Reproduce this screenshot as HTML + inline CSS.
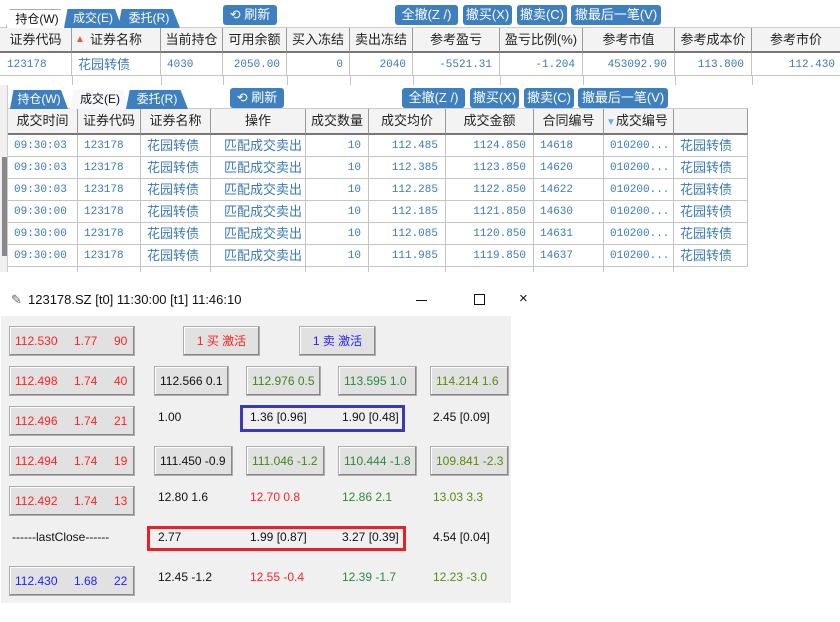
<!DOCTYPE html>
<html><head><meta charset="utf-8"><style>
*{margin:0;padding:0;box-sizing:border-box}
body{width:840px;height:622px;background:#fff;position:relative;overflow:hidden;font-family:"Liberation Sans","Noto Sans CJK SC",sans-serif}
.a{position:absolute}
.btn{position:absolute;background:#3e7fbf;color:#fff;font-size:13px;border-radius:3px;text-align:center;line-height:20px;height:20px;white-space:nowrap}
.hd{position:absolute;background:#f3f3f3;border-right:1px solid #999;border-bottom:2px solid #777;font-size:13px;color:#222;text-align:center}
.c{position:absolute;border-right:1px solid #c4c4c4;border-bottom:1px solid #c4c4c4;font-size:11px;color:#3a7ab8;font-family:"Liberation Mono","Noto Sans CJK SC",monospace;white-space:nowrap;overflow:hidden}
.c.z{font-family:"Liberation Sans","Noto Sans CJK SC",sans-serif;font-size:13px}
.tab{position:absolute;font-size:12px;height:19px;line-height:19px;text-align:center;color:#fff;background:#3e7fbf;clip-path:polygon(6% 0,88% 0,100% 100%,0 100%)}
.tab.on{background:#fff;color:#111}
.wb{position:absolute;background:#e1e1e1;border:1px solid #adadad;box-shadow:inset -1px -1px 0 #888,inset 1px 1px 0 #fff;font-family:"Liberation Sans","Noto Sans CJK SC",sans-serif;font-size:12px;line-height:28px;height:30px;white-space:nowrap}
.t{position:absolute;font-size:12px;white-space:nowrap}
</style></head><body>
<!-- top panel -->
<div class="a" style="left:0;top:27px;width:840px;height:1px;background:#ccc"></div>
<div class="tab on" style="left:6px;top:9px;width:62px;border:1px solid #aaa;border-bottom:none">持仓(W)</div>
<div class="tab" style="left:64px;top:9px;width:58px">成交(E)</div>
<div class="tab" style="left:118px;top:9px;width:62px">委托(R)</div>
<div class="btn" style="left:223px;top:5px;width:54px">⟲ 刷新</div>
<div class="btn" style="left:395px;top:5px;width:63px">全撤(Z /)</div>
<div class="btn" style="left:463px;top:5px;width:49px">撤买(X)</div>
<div class="btn" style="left:517px;top:5px;width:50px">撤卖(C)</div>
<div class="btn" style="left:571px;top:5px;width:90px">撤最后一笔(V)</div>

<div class="hd" style="left:0;top:28px;width:72px;height:25px;line-height:23px">证券代码</div>
<div class="hd" style="left:72px;top:28px;width:89px;height:25px;line-height:23px"><span style="color:#e53;font-size:10px;position:absolute;left:3px">▲</span>证券名称</div>
<div class="hd" style="left:161px;top:28px;width:62px;height:25px;line-height:23px">当前持仓</div>
<div class="hd" style="left:223px;top:28px;width:64px;height:25px;line-height:23px">可用余额</div>
<div class="hd" style="left:287px;top:28px;width:63px;height:25px;line-height:23px">买入冻结</div>
<div class="hd" style="left:350px;top:28px;width:63px;height:25px;line-height:23px">卖出冻结</div>
<div class="hd" style="left:413px;top:28px;width:87px;height:25px;line-height:23px">参考盈亏</div>
<div class="hd" style="left:500px;top:28px;width:83px;height:25px;line-height:23px">盈亏比例(%)</div>
<div class="hd" style="left:583px;top:28px;width:92px;height:25px;line-height:23px">参考市值</div>
<div class="hd" style="left:675px;top:28px;width:77px;height:25px;line-height:23px">参考成本价</div>
<div class="hd" style="left:752px;top:28px;width:88px;height:25px;line-height:23px;border-right:none">参考市价</div>

<div class="c" style="left:0;top:53px;width:72px;height:23px;line-height:24px;padding-left:7px">123178</div>
<div class="c z" style="left:72px;top:53px;width:89px;height:23px;line-height:23px;padding-left:6px">花园转债</div>
<div class="c" style="left:161px;top:53px;width:62px;height:23px;line-height:24px;padding-left:6px">4030</div>
<div class="c" style="left:223px;top:53px;width:64px;height:23px;line-height:24px;text-align:right;padding-right:6px">2050.00</div>
<div class="c" style="left:287px;top:53px;width:63px;height:23px;line-height:24px;text-align:right;padding-right:6px">0</div>
<div class="c" style="left:350px;top:53px;width:63px;height:23px;line-height:24px;text-align:right;padding-right:6px">2040</div>
<div class="c" style="left:413px;top:53px;width:87px;height:23px;line-height:24px;text-align:right;padding-right:7px">-5521.31</div>
<div class="c" style="left:500px;top:53px;width:83px;height:23px;line-height:24px;text-align:right;padding-right:7px">-1.204</div>
<div class="c" style="left:583px;top:53px;width:92px;height:23px;line-height:24px;text-align:right;padding-right:7px">453092.90</div>
<div class="c" style="left:675px;top:53px;width:77px;height:23px;line-height:24px;text-align:right;padding-right:7px">113.800</div>
<div class="c" style="left:752px;top:53px;width:88px;height:23px;line-height:24px;text-align:right;padding-right:5px;border-right:none">112.430</div>
<div class="a" style="left:72px;top:76px;width:1px;height:9px;background:#c4c4c4"></div>
<div class="a" style="left:161px;top:76px;width:1px;height:9px;background:#c4c4c4"></div>
<div class="a" style="left:223px;top:76px;width:1px;height:9px;background:#c4c4c4"></div>
<div class="a" style="left:287px;top:76px;width:1px;height:9px;background:#c4c4c4"></div>
<div class="a" style="left:350px;top:76px;width:1px;height:9px;background:#c4c4c4"></div>
<div class="a" style="left:413px;top:76px;width:1px;height:9px;background:#c4c4c4"></div>
<div class="a" style="left:500px;top:76px;width:1px;height:9px;background:#c4c4c4"></div>
<div class="a" style="left:583px;top:76px;width:1px;height:9px;background:#c4c4c4"></div>
<div class="a" style="left:675px;top:76px;width:1px;height:9px;background:#c4c4c4"></div>
<div class="a" style="left:752px;top:76px;width:1px;height:9px;background:#c4c4c4"></div>

<!-- second panel -->
<div class="a" style="left:0;top:85px;width:8px;height:187px;background:#f0f0f0;border-right:1px solid #ccc"></div>
<div class="a" style="left:2px;top:157px;width:5px;height:99px;background:#888"></div>
<div class="a" style="left:8px;top:85px;width:320px;height:24px;background:#fff"></div>
<div class="a" style="left:8px;top:108px;width:740px;height:1px;background:#ccc"></div>
<div class="tab" style="left:10px;top:90px;width:58px">持仓(W)</div>
<div class="tab on" style="left:70px;top:90px;width:60px;background:#f6f8fc">成交(E)</div>
<div class="tab" style="left:126px;top:90px;width:62px">委托(R)</div>
<div class="btn" style="left:230px;top:88px;width:54px">⟲ 刷新</div>
<div class="btn" style="left:402px;top:88px;width:63px">全撤(Z /)</div>
<div class="btn" style="left:470px;top:88px;width:49px">撤买(X)</div>
<div class="btn" style="left:524px;top:88px;width:50px">撤卖(C)</div>
<div class="btn" style="left:578px;top:88px;width:90px">撤最后一笔(V)</div>
<div id="g"></div>
<script>
var cols=[8,78,141,211,306,369,446,534,604,674,748];
var hds=["成交时间","证券代码","证券名称","操作","成交数量","成交均价","成交金额","合同编号","<span style='color:#6aaee8;font-size:10px'>▼</span>成交编号",""];
var h="";
for(var i=0;i<10;i++){h+='<div class="hd" style="left:'+cols[i]+'px;top:109px;width:'+(cols[i+1]-cols[i])+'px;height:26px;line-height:24px;'+(i==8?'text-align:left;padding-left:2px':'')+'">'+hds[i]+'</div>';}
var t=["09:30:03","09:30:03","09:30:03","09:30:00","09:30:00","09:30:00"];
var p=["112.485","112.385","112.285","112.185","112.085","111.985"];
var m=["1124.850","1123.850","1122.850","1121.850","1120.850","1119.850"];
var n=["14618","14620","14622","14630","14631","14637"];
for(var r=0;r<6;r++){var y=135+r*22;
var v=[t[r],"123178","花园转债","匹配成交卖出","10",p[r],m[r],n[r],"010200...","花园转债"];
for(var i=0;i<10;i++){var al=(i==4||i==5||i==6)?'text-align:right;padding-right:7px':'padding-left:'+(i==3?13:6)+'px';
var z=(i==2||i==3||i==9)?' z':'';
h+='<div class="c'+z+'" style="left:'+cols[i]+'px;top:'+y+'px;width:'+(cols[i+1]-cols[i])+'px;height:22px;line-height:'+(z?22:23)+'px;'+al+'">'+v[i]+'</div>';}}
for(var i=1;i<10;i++)h+='<div class="a" style="left:'+(cols[i]-1)+'px;top:267px;width:1px;height:5px;background:#c4c4c4"></div>';
document.getElementById("g").innerHTML=h;
</script>

<!-- dialog -->
<div class="a" style="left:0;top:288px;width:540px;height:25px;background:#fff"></div>
<div class="t" style="left:11px;top:292px;font-size:13px;color:#666">✎</div>
<div class="t" style="left:28px;top:292px;font-size:13px;color:#111">123178.SZ [t0] 11:30:00 [t1] 11:46:10</div>
<div class="a" style="left:416px;top:300px;width:11px;height:1px;background:#111"></div>
<div class="a" style="left:474px;top:294px;width:11px;height:11px;border:1px solid #111"></div>
<div class="t" style="left:519px;top:290px;font-size:15px;color:#111">×</div>
<div class="a" style="left:1px;top:316px;width:510px;height:287px;background:#f0f0f0"></div>

<div class="wb" style="left:9px;top:326px;width:126px;color:#f22"><span class="a" style="left:5px">112.530</span><span class="a" style="left:64px">1.77</span><span class="a" style="left:104px">90</span></div>
<div class="wb" style="left:9px;top:366px;width:126px;color:#f22"><span class="a" style="left:5px">112.498</span><span class="a" style="left:64px">1.74</span><span class="a" style="left:104px">40</span></div>
<div class="wb" style="left:9px;top:406px;width:126px;color:#f22"><span class="a" style="left:5px">112.496</span><span class="a" style="left:64px">1.74</span><span class="a" style="left:104px">21</span></div>
<div class="wb" style="left:9px;top:446px;width:126px;color:#f22"><span class="a" style="left:5px">112.494</span><span class="a" style="left:64px">1.74</span><span class="a" style="left:104px">19</span></div>
<div class="wb" style="left:9px;top:486px;width:126px;color:#f22"><span class="a" style="left:5px">112.492</span><span class="a" style="left:64px">1.74</span><span class="a" style="left:104px">13</span></div>
<div class="wb" style="left:9px;top:566px;width:126px;color:#22f"><span class="a" style="left:5px">112.430</span><span class="a" style="left:64px">1.68</span><span class="a" style="left:104px">22</span></div>
<div class="t" style="left:12px;top:530px;color:#111">------lastClose------</div>

<div class="wb" style="left:183px;top:326px;width:77px;color:#f22;text-align:center">1 买 激活</div>
<div class="wb" style="left:299px;top:326px;width:77px;color:#22f;text-align:center">1 卖 激活</div>

<div class="wb" style="left:154px;top:366px;width:75px;color:#111;padding-left:5px">112.566 0.1</div>
<div class="wb" style="left:246px;top:366px;width:75px;color:#3a8a1a;padding-left:5px">112.976 0.5</div>
<div class="wb" style="left:338px;top:366px;width:79px;color:#2a8a3a;padding-left:5px">113.595 1.0</div>
<div class="wb" style="left:430px;top:366px;width:79px;color:#5a8a10;padding-left:5px">114.214 1.6</div>

<div class="t" style="left:158px;top:410px;color:#111">1.00</div>
<div class="a" style="left:240px;top:405px;width:165px;height:27px;border:3px solid #3a3ab8"></div>
<div class="t" style="left:250px;top:410px;color:#111">1.36 [0.96]</div>
<div class="t" style="left:342px;top:410px;color:#111">1.90 [0.48]</div>
<div class="t" style="left:433px;top:410px;color:#111">2.45 [0.09]</div>

<div class="wb" style="left:154px;top:446px;width:79px;color:#111;padding-left:5px">111.450 -0.9</div>
<div class="wb" style="left:246px;top:446px;width:79px;color:#3a8a1a;padding-left:5px">111.046 -1.2</div>
<div class="wb" style="left:338px;top:446px;width:79px;color:#2a8a3a;padding-left:5px">110.444 -1.8</div>
<div class="wb" style="left:430px;top:446px;width:79px;color:#5a8a10;padding-left:5px">109.841 -2.3</div>

<div class="t" style="left:158px;top:490px;color:#111">12.80 1.6</div>
<div class="t" style="left:250px;top:490px;color:#f22">12.70 0.8</div>
<div class="t" style="left:342px;top:490px;color:#2a8a3a">12.86 2.1</div>
<div class="t" style="left:433px;top:490px;color:#5a8a10">13.03 3.3</div>

<div class="a" style="left:147px;top:526px;width:259px;height:25px;border:3px solid #e82028"></div>
<div class="t" style="left:158px;top:530px;color:#111">2.77</div>
<div class="t" style="left:250px;top:530px;color:#111">1.99 [0.87]</div>
<div class="t" style="left:342px;top:530px;color:#111">3.27 [0.39]</div>
<div class="t" style="left:433px;top:530px;color:#111">4.54 [0.04]</div>

<div class="t" style="left:158px;top:570px;color:#111">12.45 -1.2</div>
<div class="t" style="left:250px;top:570px;color:#f22">12.55 -0.4</div>
<div class="t" style="left:342px;top:570px;color:#2a8a3a">12.39 -1.7</div>
<div class="t" style="left:433px;top:570px;color:#5a8a10">12.23 -3.0</div>
</body></html>
